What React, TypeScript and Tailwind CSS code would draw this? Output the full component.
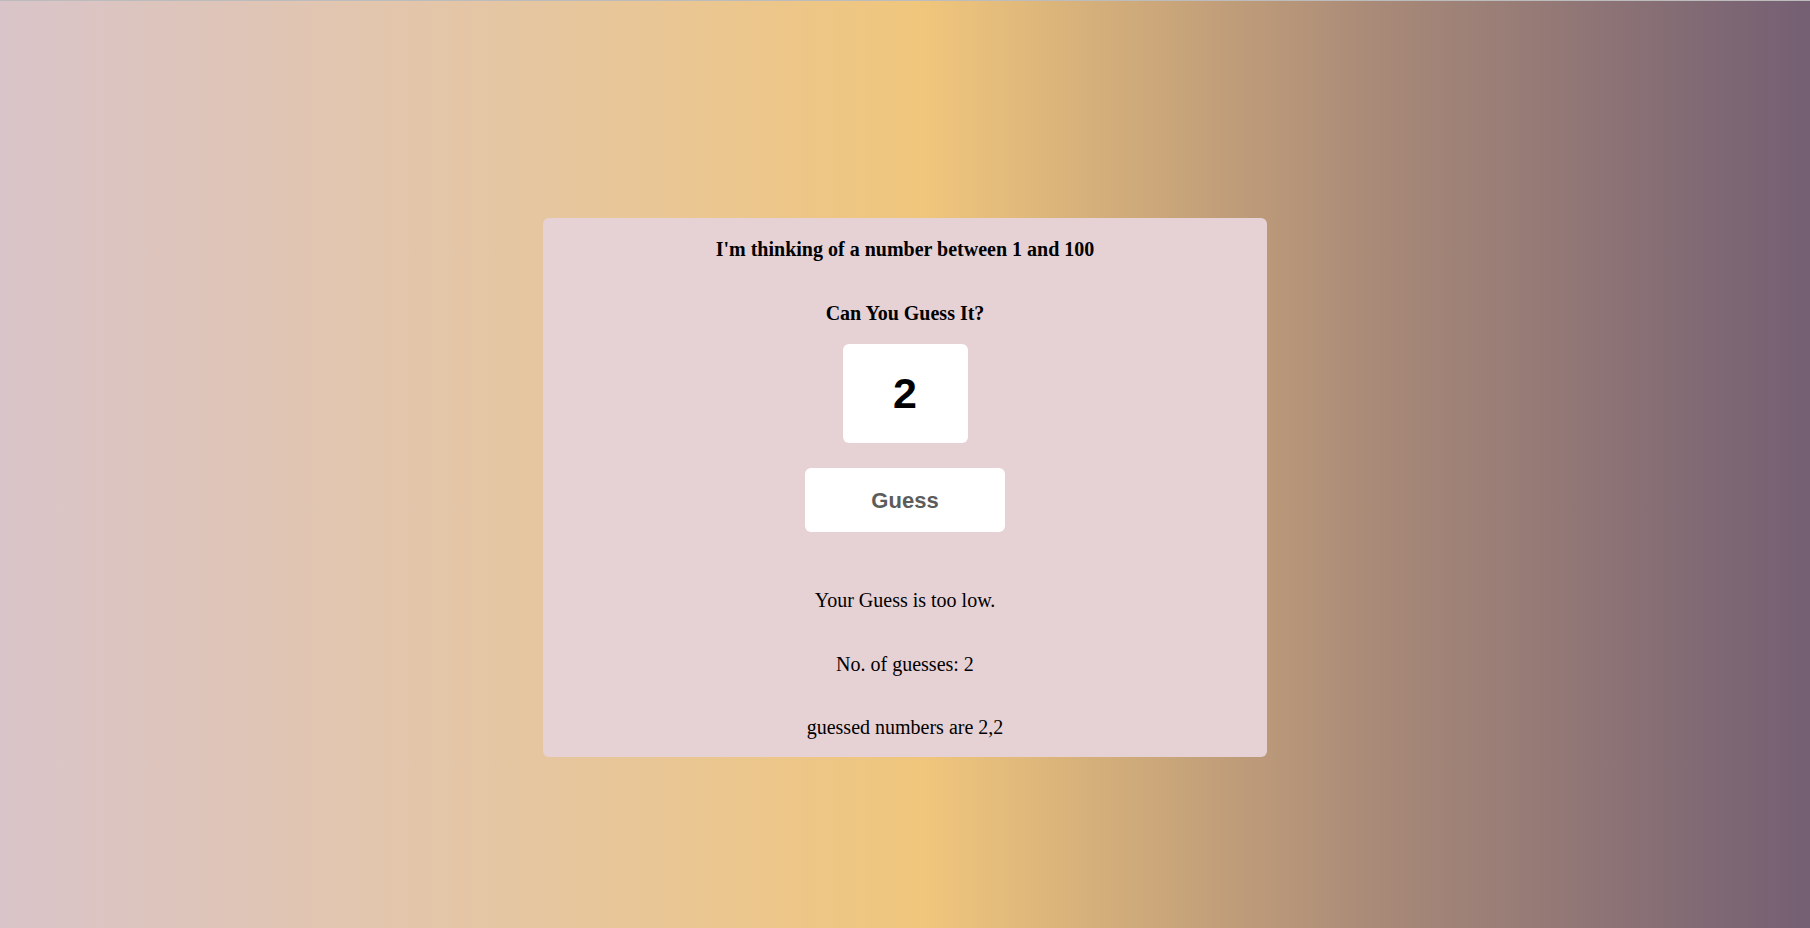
import React from "react";

export default function App() {
  return (
    <div className="w-full h-[928px] flex flex-col bg-[linear-gradient(to_right,#d9c4c9_0%,#e5c6a3_28%,#f0c67c_51%,#a98a78_76%,#745f73_100%)] overflow-hidden">
      <div className="h-px w-full bg-[#bcbcbc]" />
      <div className="flex justify-center pt-[217px]">
        <div className="w-[724px] h-[539px] bg-[#e6d1d5] rounded-[6px] flex flex-col items-center pt-[20px] font-['Liberation_Serif',serif] text-black">
          <h3 className="text-[20px] font-bold leading-[23px]">I'm thinking of a number between 1 and 100</h3>
          <h3 className="mt-[41px] text-[20px] font-bold leading-[23px]">Can You Guess It?</h3>
          <div className="mt-[19px] w-[125px] h-[99px] bg-white rounded-[6px] flex items-center justify-center font-['Liberation_Sans',sans-serif] font-bold text-[43px]">
            2
          </div>
          <button className="mt-[25px] w-[200px] h-[64px] bg-white rounded-[6px] flex items-center justify-center font-['Liberation_Sans',sans-serif] font-bold text-[22px] text-[#5c5c5c]">
            Guess
          </button>
          <p className="mt-[57px] text-[20px] leading-[23px]">Your Guess is too low.</p>
          <p className="mt-[40.5px] text-[20px] leading-[23px]">No. of guesses: 2</p>
          <p className="mt-[40.5px] text-[20px] leading-[23px]">guessed numbers are 2,2</p>
        </div>
      </div>
    </div>
  );
}
